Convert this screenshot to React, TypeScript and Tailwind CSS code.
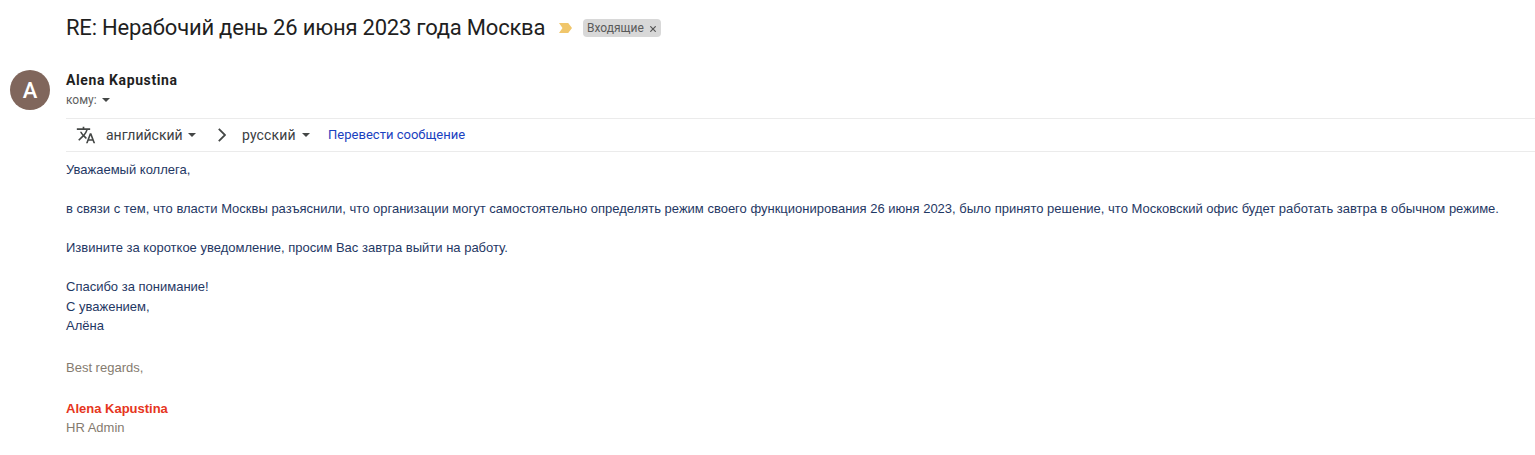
import React from "react";
import { MdTranslate } from "react-icons/md";

function Caret() {
  return (
    <svg className="shrink-0" width="8" height="4" viewBox="0 0 8 4" fill="#444746" aria-hidden="true">
      <path d="M0 0h8L4 4z" />
    </svg>
  );
}

function SubjectBar() {
  return (
    <header className="flex h-14 items-center pl-[66px]">
      <h1 className="mb-[2px] w-[493px] text-[22px] tracking-[-0.21px] text-[#1f1f1f]">
        RE: Нерабочий день 26 июня 2023 года Москва
      </h1>
      <svg width="13" height="10" viewBox="0 0 13 10" fill="#f0c66b" aria-hidden="true">
        <path d="M0 0h9.2L13 5 9.2 10H0l3.5-5z" />
      </svg>
      <span className="ml-[11px] flex h-[18px] w-[78px] items-center rounded-[4px] bg-[#d8d8d8] pl-1 text-[12px] text-[#5a5a5a]">
        <span className="w-[63px]">Входящие</span>
        <svg className="mt-px" width="6" height="6" viewBox="0 0 6 6" stroke="#555" strokeWidth="1.2" aria-hidden="true">
          <path d="M0.3 0.3l5.4 5.4M5.7 0.3L0.3 5.7" />
        </svg>
      </span>
    </header>
  );
}

function Sender() {
  return (
    <section className="flex h-[62px] pt-[14px] pl-[10px]">
      <div className="flex h-10 w-10 items-center justify-center rounded-full bg-[#80665c] text-[22px] font-medium text-white">
        A
      </div>
      <div className="ml-4">
        <div className="h-5 text-[14px] leading-5 font-bold tracking-[0.6px] text-[#1f1f1f]">Alena Kapustina</div>
        <div className="flex h-5 items-center text-[12px] text-[#5e5e5e]">
          <span className="w-9">кому:</span>
          <Caret />
        </div>
      </div>
    </section>
  );
}

function TranslateBar() {
  return (
    <section className="ml-[66px] flex h-[34px] items-center border-y border-[#ebebeb] pl-[10px] text-[14px] text-[#3c4043]">
      <MdTranslate className="h-5 w-5 shrink-0 text-[#444746]" />
      <span className="ml-[10px] w-[82px]">английский</span>
      <Caret />
      <svg className="ml-[22px]" width="8" height="14" viewBox="0 0 8 14" fill="none" stroke="#444746" strokeWidth="1.8" aria-hidden="true">
        <path d="M0.8 0.8L7 7 0.8 13.2" />
      </svg>
      <span className="ml-4 w-[60px] tracking-[0.15px]">русский</span>
      <Caret />
      <a className="ml-[18px] text-[13px] tracking-[0.02px] text-[#1a41c0]">Перевести сообщение</a>
    </section>
  );
}

function Message() {
  return (
    <article className="pt-2 pl-[66px] font-['Liberation_Sans',sans-serif] text-[13px] leading-[19.5px] text-[#1f3864]">
      <p>Уважаемый коллега,</p>
      <p className="mt-[19.5px]">
        в связи с тем, что власти Москвы разъяснили, что организации могут самостоятельно определять режим своего функционирования 26 июня 2023, было принято решение, что Московский офис будет работать завтра в обычном режиме.
      </p>
      <p className="mt-[19.5px]">Извините за короткое уведомление, просим Вас завтра выйти на работу.</p>
      <p className="mt-[19.5px]">Спасибо за понимание!</p>
      <p>С уважением,</p>
      <p>Алёна</p>
      <footer className="mt-[22px] text-[#857b6f]">
        <p>Best regards,</p>
        <p className="mt-[21.5px] font-bold text-[#e63520]">Alena Kapustina</p>
        <p className="-mt-[0.5px]">HR Admin</p>
      </footer>
    </article>
  );
}

export default function App() {
  return (
    <main className="h-[455px] w-[1535px] overflow-hidden bg-white font-['Roboto',sans-serif] whitespace-nowrap">
      <SubjectBar />
      <Sender />
      <TranslateBar />
      <Message />
    </main>
  );
}
